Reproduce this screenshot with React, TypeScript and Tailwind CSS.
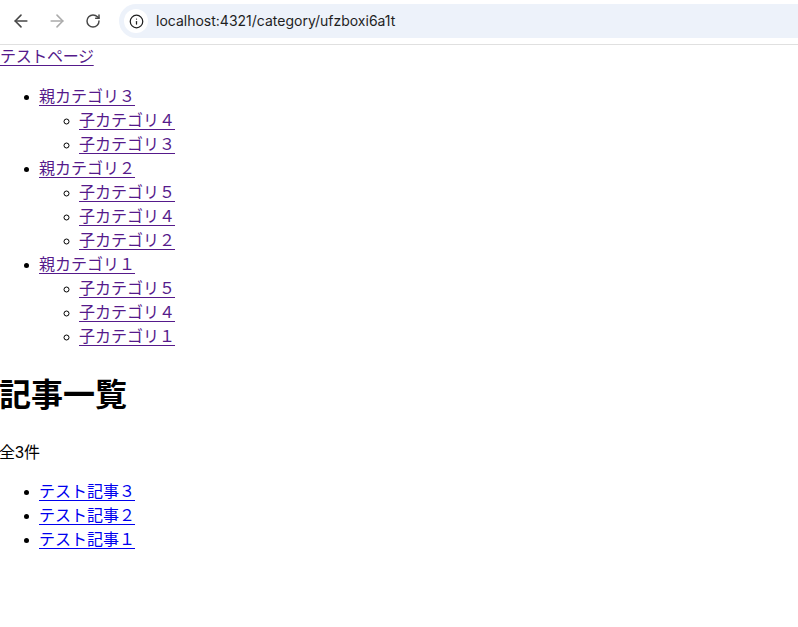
import { ArrowLeft, ArrowRight, RotateCw, Info } from "lucide-react";

const categories = [
  { name: "親カテゴリ３", children: ["子カテゴリ４", "子カテゴリ３"] },
  { name: "親カテゴリ２", children: ["子カテゴリ５", "子カテゴリ４", "子カテゴリ２"] },
  { name: "親カテゴリ１", children: ["子カテゴリ５", "子カテゴリ４", "子カテゴリ１"] },
];

const articles = ["テスト記事３", "テスト記事２", "テスト記事１"];

function NavIcon({ children, className = "" }: { children: React.ReactNode; className?: string }) {
  return <span className={`flex w-[20px] justify-center ${className}`}>{children}</span>;
}

function Toolbar() {
  return (
    <div className="flex h-[45px] items-start border-b border-[#e0e0e0] bg-white font-['Inter',sans-serif]">
      <div className="flex h-[42px] w-[119px] items-center gap-[16px] pl-[11px] text-[#474747]">
        <NavIcon><ArrowLeft size={20} strokeWidth={1.9} /></NavIcon>
        <NavIcon className="text-[#ababab]"><ArrowRight size={20} strokeWidth={1.9} /></NavIcon>
        <NavIcon><RotateCw size={16} strokeWidth={2.2} /></NavIcon>
      </div>
      <div className="mt-[4px] flex h-[34px] flex-1 items-center rounded-l-[17px] bg-[#edf2fa] pl-[5px]">
        <span className="flex h-[24px] w-[24px] items-center justify-center rounded-full bg-white text-[#1f1f1f]">
          <Info size={15} strokeWidth={2} />
        </span>
        <span className="ml-[8px] text-[14px] text-[#1f1f1f]">localhost:4321/category/ufzboxi6a1t</span>
      </div>
    </div>
  );
}

export default function App() {
  const visited = "-ml-px text-[#551a8b] underline underline-offset-[3px]";
  return (
    <div className="h-[627px] overflow-hidden bg-white text-[16px] leading-[24px] text-black font-['Liberation_Sans','Noto_Sans_CJK_JP',sans-serif]">
      <Toolbar />
      <a href="#" className="block w-fit tracking-[-0.33px] text-[#551a8b] underline underline-offset-[3px]">テストページ</a>
      <ul className="mt-[16px] list-disc pl-[40px]">
        {categories.map((cat) => (
          <li key={cat.name}>
            <a href="#" className={visited}>{cat.name}</a>
            <ul className="list-[circle] pl-[40px]">
              {cat.children.map((child) => (
                <li key={child}>
                  <a href="#" className={visited}>{child}</a>
                </li>
              ))}
            </ul>
          </li>
        ))}
      </ul>
      <h1 className="mt-[22px] h-[48px] text-[32px] leading-[48px] font-bold -ml-px">記事一覧</h1>
      <p className="mt-[22px] -ml-px">全3件</p>
      <ul className="mt-[15px] list-disc pl-[40px]">
        {articles.map((title) => (
          <li key={title}>
            <a href="#" className="-ml-px text-[#0000ee] underline underline-offset-[3px]">{title}</a>
          </li>
        ))}
      </ul>
    </div>
  );
}
